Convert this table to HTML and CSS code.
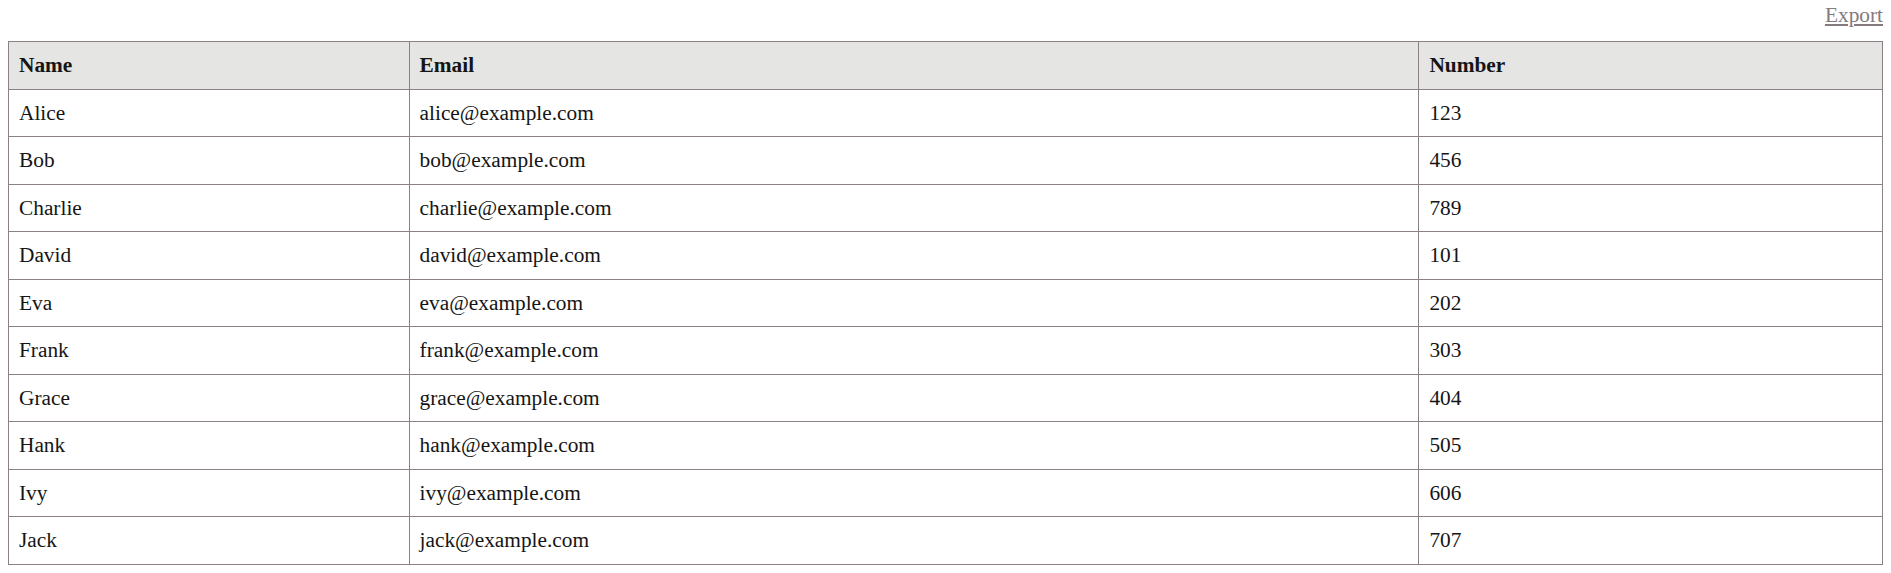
FILE: index.html
```html
<!DOCTYPE html>
<html>
<head>
<meta charset="utf-8">
<link rel="stylesheet" href="styles.css">
</head>
<body>
<div class="page">
  <div class="toolbar"><a class="export" href="#">Export</a></div>
  <table class="data">
    <colgroup>
      <col class="c-name">
      <col class="c-email">
      <col class="c-number">
    </colgroup>
    <thead>
      <tr><th>Name</th><th>Email</th><th>Number</th></tr>
    </thead>
    <tbody>
      <tr><td>Alice</td><td>alice@example.com</td><td>123</td></tr>
      <tr><td>Bob</td><td>bob@example.com</td><td>456</td></tr>
      <tr><td>Charlie</td><td>charlie@example.com</td><td>789</td></tr>
      <tr><td>David</td><td>david@example.com</td><td>101</td></tr>
      <tr><td>Eva</td><td>eva@example.com</td><td>202</td></tr>
      <tr><td>Frank</td><td>frank@example.com</td><td>303</td></tr>
      <tr><td>Grace</td><td>grace@example.com</td><td>404</td></tr>
      <tr><td>Hank</td><td>hank@example.com</td><td>505</td></tr>
      <tr><td>Ivy</td><td>ivy@example.com</td><td>606</td></tr>
      <tr><td>Jack</td><td>jack@example.com</td><td>707</td></tr>
    </tbody>
  </table>
</div>
</body>
</html>
```
FILE: styles.css
```css
html, body {
  margin: 0;
  padding: 0;
  background: #ffffff;
}
body {
  font-family: "Liberation Serif", "Times New Roman", serif;
  color: #151515;
}
.page {
  padding: 0 8px 8px 8px;
}
.toolbar {
  box-sizing: border-box;
  display: flex;
  justify-content: flex-end;
  align-items: flex-start;
  height: 27px;
  padding-top: 3px;
  margin-bottom: 14px;
}
.export {
  font-size: 21.33px;
  line-height: 24px;
  color: #857a7d;
  text-decoration: underline;
}
.data {
  width: 100%;
  border-collapse: collapse;
  table-layout: fixed;
  font-size: 21.33px;
}
.c-name { width: 21.375%; }
.c-email { width: 53.89%; }
.data th,
.data td {
  border: 1px solid #8b8083;
  padding: 11px 10px;
  line-height: 24.5px;
  text-align: left;
  vertical-align: middle;
}
.data th {
  background: #e5e5e3;
  font-weight: bold;
}
```
